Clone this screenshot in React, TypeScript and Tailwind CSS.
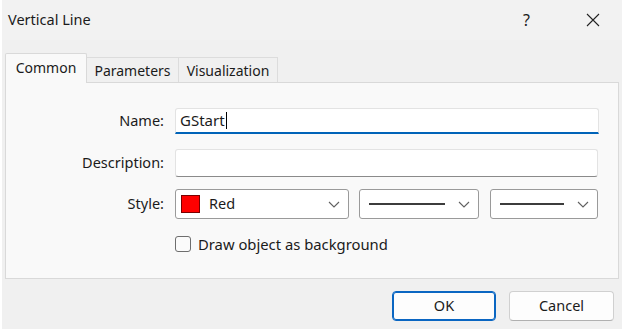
import React from "react"

const font = { fontFamily: '"Noto Sans", "Open Sans", sans-serif' }

function Chevron() {
  return (
    <svg width="12" height="7" viewBox="0 0 12 7" className="shrink-0">
      <polyline points="1,1 6,6 11,1" fill="none" stroke="#606060" strokeWidth="1.1" />
    </svg>
  )
}

function LineSelect({ width, line }: { width: string; line: string }) {
  return (
    <div className={`flex h-[30px] ${width} items-center rounded-[3px] border border-[#9a9a9a] bg-white pl-[9px] pr-[8px]`}>
      <div className={`h-[2px] ${line} bg-[#3c3c3c]`} />
      <div className="flex-1" />
      <Chevron />
    </div>
  )
}

export default function App() {
  return (
    <div className="h-[331px] w-[622px] bg-white" style={font}>
      <div className="ml-[2px] flex h-[329px] w-[620px] flex-col bg-[#f0f0f0] text-[#1b1b1b]">
        {/* title bar */}
        <div className="flex h-[40px] items-center bg-[#f2f2f2] pl-[6px]">
          <span className="text-[14.5px]">Vertical Line</span>
          <div className="flex-1" />
          <span className="mr-[56px] text-[16px]">?</span>
          <svg width="14" height="14" viewBox="0 0 14 14" className="mr-[22px]">
            <path d="M1 1 L13 13 M13 1 L1 13" stroke="#222" strokeWidth="1.1" />
          </svg>
        </div>

        {/* tabs */}
        <div className="mt-[13px] flex items-end pl-[3px]">
          <div className="relative z-10 -mb-px flex h-[30px] w-[82px] items-start justify-center rounded-t-[2px] border border-b-0 border-[#d9d9d9] bg-[#f9f9f9] pt-[3px] text-[14px]">
            Common
          </div>
          <div className="flex h-[25px] w-[92px] items-center justify-center border border-b-0 border-l-0 border-[#dcdcdc] bg-[#f0f0f0] text-[14px]">
            Parameters
          </div>
          <div className="flex h-[25px] w-[99px] items-center justify-center border border-b-0 border-l-0 border-[#dcdcdc] bg-[#f0f0f0] text-[14px]">
            Visualization
          </div>
        </div>

        {/* panel */}
        <div className="mx-[3px] flex h-[197px] flex-col border border-[#d9d9d9] bg-[#f9f9f9] pt-[25px] text-[14.5px]">
          <div className="flex items-center">
            <span className="w-[158px] text-right">Name:</span>
            <div className="ml-[11px] flex h-[26px] w-[424px] items-center rounded-t-[3px] border border-b-2 border-[#e3e3e3] border-b-[#0063b8] bg-white pl-[4px] text-[15px]">
              GStart<span className="ml-px h-[17px] w-px bg-black" />
            </div>
          </div>
          <div className="mt-[15px] flex items-center">
            <span className="w-[158px] text-right">Description:</span>
            <div className="ml-[11px] h-[28px] w-[423px] rounded-[3px] border border-[#e3e3e3] border-b-[#8a8a8a] bg-white" />
          </div>
          <div className="mt-[12px] flex items-center">
            <span className="w-[158px] text-right">Style:</span>
            <div className="ml-[11px] flex h-[30px] w-[174px] items-center rounded-[3px] border border-[#9a9a9a] bg-white pl-[5px] pr-[8px]">
              <div className="h-[18px] w-[19px] border border-[#7a0000] bg-[#ff0000]" />
              <span className="ml-[9px] text-[14.5px]">Red</span>
              <div className="flex-1" />
              <Chevron />
            </div>
            <div className="ml-[10px]">
              <LineSelect width="w-[120px]" line="w-[76px]" />
            </div>
            <div className="ml-[11px]">
              <LineSelect width="w-[108px]" line="w-[64px]" />
            </div>
          </div>
          <div className="mt-[14px] flex items-center pl-[169px]">
            <div className="h-[16px] w-[16px] rounded-[3px] border border-[#6e6e6e] bg-[#fbfbfb]" />
            <span className="ml-[7px] text-[14.8px]">Draw object as background</span>
          </div>
        </div>

        {/* buttons */}
        <div className="mt-[12px] flex justify-end pr-[8px] text-[14.5px]">
          <button className="h-[30px] w-[104px] rounded-[4px] border border-[#0a66c2] bg-[#fdfdfd] shadow-[inset_0_0_0_1px_#0a66c2]">
            OK
          </button>
          <button className="ml-[13px] h-[30px] w-[105px] rounded-[4px] border border-[#d0d0d0] border-b-[#b0b0b0] bg-[#fdfdfd]">
            Cancel
          </button>
        </div>
      </div>
    </div>
  )
}
